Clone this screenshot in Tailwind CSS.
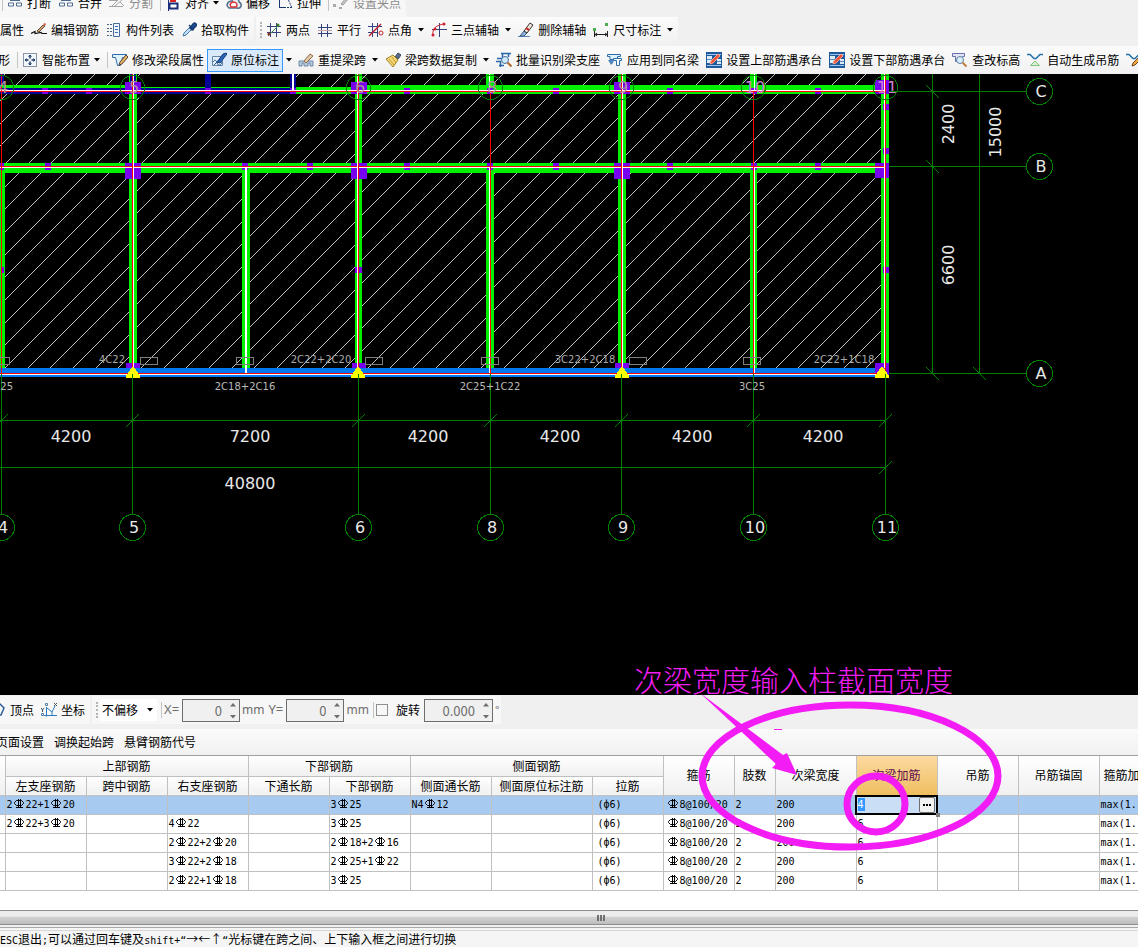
<!DOCTYPE html>
<html lang="zh-CN">
<head>
  <meta charset="UTF-8">
  <title>梁原位标注</title>
  <script src="https://cdn.jsdelivr.net/npm/@tailwindcss/browser@4"></script>
</head>
<body class="h-screen flex flex-col overflow-hidden bg-[#f0f0f0] text-black text-xs font-['Noto_Sans_CJK_SC',sans-serif]">

  <!-- Icon sprite -->
  <svg class="hidden">
    <defs>
      <symbol id="arrow" viewBox="0 0 6 4"><path d="M0 0h6L3 3.5z" fill="#000"/></symbol>
      <symbol id="rebar" viewBox="0 0 12 12"><path d="M3.500 2.500h5l2 2v1l-2 2h-5l-2-2v-1z" fill="none" stroke="#000"/><path d="M5.500 1v9M7.500 1v9M3 9.500h7" fill="none" stroke="#000" shape-rendering="crispEdges"/></symbol>
      <symbol id="break" viewBox="0 0 16 16"><path d="M1.500 8v3h5v-3zM9.500 8v3h5v-3zM3 5.500h10" fill="#fff" stroke="#4f6d8f"/></symbol>
      <symbol id="split" viewBox="0 0 16 16"><path d="M0 5.500h9M0 11.500h14M3 11l9-9 2 2-9 8M11 7l4 4" fill="none" stroke="#a5a5a5"/></symbol>
      <symbol id="align" viewBox="0 0 16 16"><path d="M3.500 0v16" stroke="#1c2f7c"/><path d="M5 3h6v4H5z" fill="#d22"/><path d="M4.500 8.500h8v5h-8z" fill="#fff" stroke="#1c2f7c" stroke-width="2"/></symbol>
      <symbol id="offset" viewBox="0 0 16 16"><path d="M3 13c-4-3-1-7 3-7 1-4 7-3 7 1 4 2 2 7-2 6z" fill="#e7eef5" stroke="#536d87" stroke-width="1.500"/><path d="M5 12c-2-3 0-4 2-5 4 0 5 3 3 5z" fill="#fff" stroke="#d33" stroke-width="1.500"/></symbol>
      <symbol id="stretch" viewBox="0 0 16 16"><path d="M2.500 2v11M2 12.500h5" stroke="#17396e" fill="none"/><path d="M5 4.500h6M7 12.500h8M11.500 5l3 7" stroke="#17396e" stroke-dasharray="2 1" fill="none"/></symbol>
      <symbol id="grips" viewBox="0 0 16 16"><path d="M0 9h3v3H0zM6 12h3v2H6z" fill="#aaa"/><path d="M8 9l6-7 2 1-6 7z" fill="#c9c9c9" stroke="#999"/></symbol>
      <symbol id="editbar" viewBox="0 0 16 16"><path d="M0 11.500l4-2v2l6-1 1 1h5" fill="none" stroke="#111" stroke-width="1.200"/><path d="M6 9l6-6 2 1-6 6z" fill="#c8a878" stroke="#6b4a36"/><path d="M12 2l2 2 1-2-1-1z" fill="#e65b4f"/></symbol>
      <symbol id="list" viewBox="0 0 16 16"><path d="M7.500 1.500h6v13h-6z" fill="#eef5fc" stroke="#4c6c98"/><path d="M9 4.500h3M9 7.500h3M9 10.500h3" stroke="#3671b8"/><path d="M1 2.500h5M1 6.500h5M1 9.500h5M1 13.500h5" stroke="#46617f" stroke-dasharray="2 1"/></symbol>
      <symbol id="pick" viewBox="0 0 16 16"><path d="M2 14l1-3 6-6 2 2-6 6z" fill="#bfe0f7" stroke="#477aa8"/><path d="M8 3l5 5M9 6l3-4c2-2 4 0 3 2l-4 4z" fill="#1e5096" stroke="#173c75" stroke-width="1.500"/></symbol>
      <symbol id="grid2" viewBox="0 0 16 16"><path d="M4.500 1v14M10.500 1v14M1 4.500h14M1 10.500h14" stroke="#35437c"/><path d="M2 14L13 3" stroke="#35854a"/><circle cx="12" cy="3" r="1.500" fill="#3a7f2c"/><circle cx="3" cy="12" r="1.500" fill="#902c1c"/></symbol>
      <symbol id="gridp" viewBox="0 0 16 16"><path d="M4.500 2v13M10.500 2v13M1 5.500h14" stroke="#35437c"/><path d="M1 11.500h14" stroke="#35437c"/><path d="M1 8.500h14" stroke="#c9a0a8"/></symbol>
      <symbol id="gridc" viewBox="0 0 16 16"><path d="M4.500 1v14M9.500 1v14M0 4.500h14M0 10.500h10" stroke="#35437c"/><path d="M1 14L13 2" stroke="#c2232f" stroke-width="1.500"/><circle cx="13" cy="11" r="2" fill="none" stroke="#c2232f"/></symbol>
      <symbol id="grid3" viewBox="0 0 16 16"><path d="M8.500 1v14M1 7.500h15" stroke="#35437c"/><path d="M2 13C1 7 5 3 13 2" fill="none" stroke="#d0202c"/><circle cx="2" cy="13" r="1.500" fill="#d0202c"/><circle cx="4" cy="7" r="1.500" fill="#d0202c"/><circle cx="13" cy="2" r="1.500" fill="#d0202c"/></symbol>
      <symbol id="erase" viewBox="0 0 16 16"><path d="M0 14.500h12" stroke="#5b85b4"/><path d="M2 14l4-5 3 2-3 3z" fill="#8fb4df" stroke="#3a5a85"/><path d="M6 9l6-8 3 2-6 8z" fill="#efe7dc" stroke="#333"/><path d="M8 6l3 2" stroke="#c22" stroke-width="2"/></symbol>
      <symbol id="dim" viewBox="0 0 16 16"><path d="M1.500 9v6M14.500 9v6M2 12.500h12M4 11l-2 1.500 2 1.500M12 11l2 1.500-2 1.500" fill="none" stroke="#222"/><path d="M0 6h3v3H0zM12 1h3v3h-3z" fill="#4cae4f"/></symbol>
      <symbol id="smart" viewBox="0 0 16 16"><path d="M1.500 1.500h13v13h-13z" fill="#f2f7fc" stroke="#1b3557" stroke-dasharray="1 1"/><path d="M8 3v3.500M8 9.500V13M3 8h3.500M9.500 8H13" stroke="#16355e" stroke-width="1.500"/><path d="M6.500 4.500L8 3l1.500 1.500M6.500 11.500L8 13l1.500-1.500M4.500 6.500L3 8l1.500 1.500M11.500 6.500L13 8l-1.500 1.500" fill="none" stroke="#16355e"/></symbol>
      <symbol id="seg" viewBox="0 0 16 16"><path d="M.5 2.500h14v3h-4l-2 8h-3l-2-8h-3z" fill="#dff1fb" stroke="#2e6da8"/><path d="M7 13l1-3 6-7 2 2-6 7z" fill="#e8b266" stroke="#5a4432"/></symbol>
      <symbol id="inplace" viewBox="0 0 16 16"><path d="M1.500 4.500h10v9h-10z" fill="#e6f0fa" stroke="#6586a8"/><path d="M3 13l8-8M2 10c2-3 3-2 4 1s4 3 5-1" stroke="#27588f" fill="none"/><path d="M6 10l6-8 3-1 1 1-7 9z" fill="#2a66b5" stroke="#163d7b"/></symbol>
      <symbol id="respan" viewBox="0 0 16 16"><path d="M1 14v-5h14v5h-3v-3h-2v3H6v-3H4v3z" fill="#b9cbdf" stroke="#6e89a8"/><path d="M6 9l6-7 3 2-7 7z" fill="#e3c9a6" stroke="#896a4d"/></symbol>
      <symbol id="brush" viewBox="0 0 16 16"><path d="M10 5l3-4 3 2-3 4z" fill="#5a6d86" stroke="#36445a"/><path d="M1 7l7-4 5 5-5 7z" fill="#f4d976" stroke="#a2832c"/><path d="M4 7l5 6M7 5l4 6" stroke="#c49c35"/></symbol>
      <symbol id="batch" viewBox="0 0 16 16"><path d="M5 1.500h10M1 6.500h6M0 9.500h5M3 13.500h5M6.500 1v5M12.500 1v4M4.500 9v6" stroke="#2765ac" stroke-width="1.500"/><circle cx="9" cy="8" r="3.500" fill="#cfe8fb" stroke="#44719f"/><path d="M11.500 10.500l4 4" stroke="#b56b2f" stroke-width="2"/></symbol>
      <symbol id="apply" viewBox="0 0 16 16"><path d="M.5 2.500h13v2h-3v3H3v-3H.500z" fill="#dff1fb" stroke="#2e6da8"/><path d="M6.500 6.500h8v2h-2v5h-3v-5h-3z" fill="#fff" stroke="#2e6da8"/><path d="M1 8h6l-1 3-2 2z" fill="#5288be"/></symbol>
      <symbol id="cap" viewBox="0 0 16 16"><path d="M0 0h16v16H0z" fill="#1e5a9c"/><path d="M1 2.500h14M1 13.500h14" stroke="#9ec5ea"/><path d="M1 4h5v7H1zM11 7h4v5h-4z" fill="#dcebf8"/><path d="M1 7.500h5M11 9.500h4" stroke="#5a8cc0"/><path d="M4 12l1-3 7-7 2 2-7 7z" fill="#ef5136" stroke="#f7a08e"/></symbol>
      <symbol id="elev" viewBox="0 0 16 16"><path d="M.5 1.500h12v3h-2v5h-7v-5h-3z" fill="#e5e4f5" stroke="#6671ac"/><circle cx="8" cy="8" r="3.500" fill="#d9effb" stroke="#62809f"/><path d="M10.500 10.500l4 4" stroke="#bf7f41" stroke-width="2"/></symbol>
      <symbol id="hang" viewBox="0 0 16 16"><path d="M0 2.500h3l4 4h2l4-4h3" fill="none" stroke="#2471a8" stroke-width="1.500"/><path d="M3.500 13.500L8 9l4.500 4.500z" fill="#d9f1d0" stroke="#84c180"/></symbol>
      <symbol id="hangedit" viewBox="0 0 16 16"><path d="M0 2.500h3l4 4h2l4-4h3" fill="none" stroke="#2471a8" stroke-width="1.500"/><path d="M6 14l1-3 6-6 2 2-6 6z" fill="#f0a63c" stroke="#6b4a26"/></symbol>
      <symbol id="vertex" viewBox="0 0 16 16"><path d="M9 1l5 5-3 7H4" fill="none" stroke="#2d5d9f" stroke-width="1.500"/></symbol>
      <symbol id="coord" viewBox="0 0 16 16"><path d="M5.500 5v9.500M3 13.500h13M6 6l5 4 3-6M11 10v4" fill="none" stroke="#2b7cc0"/><path d="M4.500 1.500h2v2h-2zM.5 11.500h2v2h-2z" fill="#fff" stroke="#567fa9"/><path d="M13 1l3 3M16 1l-3 3M0 6l1.500 2L3 6M1.500 8v2" fill="none" stroke="#48525e"/></symbol>
    </defs>
  </svg>

  <!-- Toolbars -->
  <header class="shrink-0 overflow-hidden whitespace-nowrap">
    <div class="h-[17px] flex items-end overflow-hidden">
      <div class="h-[29px] flex items-center bg-[#f7f7f7] pr-0.5">
        <span class="w-px h-4 ml-0.5 bg-[#c4c4c4]"></span>
        <button class="flex items-center gap-1 pl-1 pr-[3px]"><svg class="size-4"><use href="#break"/></svg>打断</button>
        <button class="flex items-center gap-1 pl-1 pr-[3px]"><svg class="size-4"><use href="#break"/></svg>合并</button>
        <button class="flex items-center gap-1 pl-1 pr-[3px] text-[#8d8d8d]"><svg class="size-4"><use href="#split"/></svg>分割</button>
        <span class="w-px h-4 ml-1 bg-[#c4c4c4]"></span>
        <button class="flex items-center gap-1 pl-1 pr-[3px]"><svg class="size-4"><use href="#align"/></svg>对齐<svg class="w-1.5 h-1"><use href="#arrow"/></svg></button>
        <button class="flex items-center gap-1 pl-1 pr-[3px]"><svg class="size-4"><use href="#offset"/></svg>偏移</button>
        <button class="flex items-center gap-1 pl-1 pr-[3px]"><svg class="size-4"><use href="#stretch"/></svg>拉伸</button>
        <span class="w-px h-4 ml-1 bg-[#c4c4c4]"></span>
        <button class="flex items-center gap-1 pl-1 pr-[3px] text-[#8d8d8d]"><svg class="size-4"><use href="#grips"/></svg>设置夹点</button>
      </div>
    </div>
    <div class="h-[29px] flex items-start">
      <div class="h-7 pb-0.5 flex items-center bg-linear-to-b from-[#fbfbfb] to-[#f1f1f1] pr-0.5">
        <button class="pr-[3px]">属性</button>
        <button class="flex items-center gap-1 pl-1 pr-[3px]"><svg class="size-4"><use href="#editbar"/></svg>编辑钢筋</button>
        <button class="flex items-center gap-1 pl-1 pr-[3px]"><svg class="size-4"><use href="#list"/></svg>构件列表</button>
        <button class="flex items-center gap-1 pl-1 pr-[3px]"><svg class="size-4"><use href="#pick"/></svg>拾取构件</button>
      </div>
      <div class="h-7 pb-0.5 flex items-center bg-linear-to-b from-[#fbfbfb] to-[#f1f1f1] ml-0.5 pl-1 pr-0.5">
        <span class="h-4 border-l-2 border-dotted border-[#b5b5b5]"></span>
        <button class="flex items-center gap-1 pl-1 pr-[3px]"><svg class="size-4"><use href="#grid2"/></svg>两点</button>
        <button class="flex items-center gap-1 pl-1 pr-[3px]"><svg class="size-4"><use href="#gridp"/></svg>平行</button>
        <button class="flex items-center gap-1 pl-1 pr-[3px]"><svg class="size-4"><use href="#gridc"/></svg>点角</button>
        <button class="px-[3px]" aria-label="点角选项"><svg class="w-1.5 h-1"><use href="#arrow"/></svg></button>
        <button class="flex items-center gap-1 pl-1 pr-[3px]"><svg class="size-4"><use href="#grid3"/></svg>三点辅轴</button>
        <button class="px-[3px]" aria-label="三点辅轴选项"><svg class="w-1.5 h-1"><use href="#arrow"/></svg></button>
        <button class="flex items-center gap-1 pl-1 pr-[3px]"><svg class="size-4"><use href="#erase"/></svg>删除辅轴</button>
        <button class="flex items-center gap-1 pl-1 pr-[3px]"><svg class="size-4"><use href="#dim"/></svg>尺寸标注</button>
        <button class="px-[3px]" aria-label="尺寸标注选项"><svg class="w-1.5 h-1"><use href="#arrow"/></svg></button>
      </div>
    </div>
    <div class="h-7 flex items-center bg-linear-to-b from-[#fbfbfb] to-[#f1f1f1]">
      <button class="-ml-0.5 pr-[3px] shrink-0">形</button>
      <span class="w-px h-4 ml-1 bg-[#c4c4c4] shrink-0"></span>
      <button class="flex items-center gap-1 pl-1 pr-[3px] shrink-0"><svg class="size-4"><use href="#smart"/></svg>智能布置<svg class="w-1.5 h-1"><use href="#arrow"/></svg></button>
      <span class="w-px h-4 ml-1 bg-[#c4c4c4] shrink-0"></span>
      <button class="flex items-center gap-1 pl-1 pr-[3px] shrink-0"><svg class="size-4"><use href="#seg"/></svg>修改梁段属性</button>
      <button class="h-[23px] flex items-center gap-1 px-[3px] border border-[#3399ff] bg-[#dbeafa] shrink-0"><svg class="size-4"><use href="#inplace"/></svg>原位标注</button>
      <button class="px-[3px] shrink-0" aria-label="原位标注选项"><svg class="w-1.5 h-1"><use href="#arrow"/></svg></button>
      <button class="flex items-center gap-1 px-[3px] shrink-0"><svg class="size-4"><use href="#respan"/></svg>重提梁跨</button>
      <button class="px-[3px] shrink-0" aria-label="重提梁跨选项"><svg class="w-1.5 h-1"><use href="#arrow"/></svg></button>
      <button class="flex items-center gap-1 pl-1 pr-[3px] shrink-0"><svg class="size-4"><use href="#brush"/></svg>梁跨数据复制</button>
      <button class="px-[3px] shrink-0" aria-label="梁跨数据复制选项"><svg class="w-1.5 h-1"><use href="#arrow"/></svg></button>
      <button class="flex items-center gap-1 pl-1 pr-[3px] shrink-0"><svg class="size-4"><use href="#batch"/></svg>批量识别梁支座</button>
      <button class="flex items-center gap-1 pl-1 pr-[3px] shrink-0"><svg class="size-4"><use href="#apply"/></svg>应用到同名梁</button>
      <button class="flex items-center gap-1 pl-1 pr-[3px] shrink-0"><svg class="size-4"><use href="#cap"/></svg>设置上部筋遇承台</button>
      <button class="flex items-center gap-1 pl-1 pr-[3px] shrink-0"><svg class="size-4"><use href="#cap"/></svg>设置下部筋遇承台</button>
      <button class="flex items-center gap-1 pl-1 pr-[3px] shrink-0"><svg class="size-4"><use href="#elev"/></svg>查改标高</button>
      <button class="flex items-center gap-1 pl-1 pr-[3px] shrink-0"><svg class="size-4"><use href="#hang"/></svg>自动生成吊筋</button>
      <button class="pl-1 shrink-0" aria-label="编辑吊筋"><svg class="size-4"><use href="#hangedit"/></svg></button>
    </div>
  </header>

  <!-- Floor plan -->
  <main class="flex-1 min-h-0 bg-black">
    <svg id="plan" class="w-full h-full font-['DejaVu_Sans',sans-serif]"></svg>
  </main>

  <!-- Bottom dock -->
  <section class="relative z-10 shrink-0 whitespace-nowrap">
    <div class="h-[34px] flex items-center pb-1">
      <div class="h-7 flex items-center bg-[#f7f7f7] pr-0.5">
        <button class="flex items-center gap-1 -ml-2.5 pr-[3px]"><svg class="size-4"><use href="#vertex"/></svg>顶点</button>
        <button class="flex items-center gap-1 pl-1 pr-[3px]"><svg class="size-4"><use href="#coord"/></svg>坐标</button>
      </div>
      <div class="h-7 flex items-center bg-[#f7f7f7] ml-0.5 pl-1 text-[#6d6d6d]">
        <span class="h-4 mr-0.5 border-l-2 border-dotted border-[#b5b5b5]"></span>
        <div class="relative flex items-center">
          <select class="w-[57px] h-[22px] appearance-none bg-white pl-0.5 text-black" aria-label="偏移方式"><option>不偏移</option></select>
          <svg class="absolute right-1 w-1.5 h-1 pointer-events-none"><use href="#arrow"/></svg>
        </div>
        <span class="w-px h-4 ml-1 mr-0.5 bg-[#c4c4c4]"></span>
        <label for="offX" class="w-[18px] text-[13px] font-['Noto_Sans',sans-serif]">X=</label>
        <div class="relative">
          <input id="offX" value="0" class="block w-[58px] h-[23px] border border-[#6d6d6d] bg-[#f0f0f0] pr-[17px] text-right text-[13px]">
          <svg class="absolute right-1 top-1 w-1.5 h-4" viewBox="0 0 6 16"><path d="M0 3.500h6L3 0zM0 12h6l-3 3.500z" fill="#6d6d6d"/></svg>
        </div>
        <span class="mx-0.5 font-['Noto_Sans',sans-serif]">mm</span>
        <label for="offY" class="w-[18px] ml-0.5 text-[13px] font-['Noto_Sans',sans-serif]">Y=</label>
        <div class="relative">
          <input id="offY" value="0" class="block w-[58px] h-[23px] border border-[#6d6d6d] bg-[#f0f0f0] pr-[17px] text-right text-[13px]">
          <svg class="absolute right-1 top-1 w-1.5 h-4" viewBox="0 0 6 16"><path d="M0 3.500h6L3 0zM0 12h6l-3 3.500z" fill="#6d6d6d"/></svg>
        </div>
        <span class="mx-0.5 font-['Noto_Sans',sans-serif]">mm</span>
        <span class="w-px h-4 mx-0.5 bg-[#c4c4c4]"></span>
        <input id="rotate" type="checkbox" class="appearance-none size-3 mr-2 border border-[#8f8f8f]">
        <label for="rotate" class="mr-1 text-black">旋转</label>
        <div class="relative">
          <input value="0.000" aria-label="旋转角度" class="block w-[69px] h-[23px] border border-[#6d6d6d] bg-[#f0f0f0] pr-[17px] text-right text-[13px]">
          <svg class="absolute right-1 top-1 w-1.5 h-4" viewBox="0 0 6 16"><path d="M0 3.500h6L3 0zM0 12h6l-3 3.500z" fill="#6d6d6d"/></svg>
        </div>
        <span class="px-0.5">°</span>
      </div>
    </div>

    <div class="h-[27px] flex items-center gap-2.5 bg-linear-to-b from-[#fbfbfb] to-[#f1f1f1] border-b border-[#a0a0a0]">
      <button class="-ml-1">页面设置</button>
      <button>调换起始跨</button>
      <button>悬臂钢筋代号</button>
    </div>

    <div class="h-[154px] bg-white overflow-hidden">
      <table class="table-fixed w-[1180px] border-collapse text-left">
        <colgroup>
          <col class="w-[5px]"><col class="w-[81px]"><col class="w-[81px]"><col class="w-[81px]"><col class="w-[81px]"><col class="w-[81px]">
          <col class="w-[81px]"><col class="w-[101px]"><col class="w-[71px]"><col class="w-[71px]"><col class="w-[41px]"><col class="w-[81px]">
          <col class="w-[81px]"><col class="w-[81px]"><col class="w-[81px]"><col class="w-[81px]">
        </colgroup>
        <thead class="text-center [&_th]:font-normal [&_th]:p-0 [&_th]:leading-4 [&_th]:border-r [&_th]:border-b [&_th]:border-[#c0c0c0] [&_th]:bg-linear-to-b [&_th]:from-white [&_th]:to-[#f0f0f0]">
          <tr class="h-5">
            <th rowspan="2"></th>
            <th colspan="3">上部钢筋</th>
            <th colspan="2">下部钢筋</th>
            <th colspan="3">侧面钢筋</th>
            <th rowspan="2">箍筋</th>
            <th rowspan="2">肢数</th>
            <th rowspan="2">次梁宽度</th>
            <td rowspan="2" class="p-0 border-r border-b border-[#c0c0c0] bg-linear-to-b from-[#fbd9a0] to-[#f0be5e] text-[#5c0a4c]">次梁加筋</td>
            <th rowspan="2">吊筋</th>
            <th rowspan="2">吊筋锚固</th>
            <th rowspan="2"><div class="pl-1 text-left overflow-hidden">箍筋加密长度</div></th>
          </tr>
          <tr class="h-[19px]">
            <th>左支座钢筋</th><th>跨中钢筋</th><th>右支座钢筋</th><th>下通长筋</th><th>下部钢筋</th>
            <th>侧面通长筋</th><th>侧面原位标注筋</th><th>拉筋</th>
          </tr>
        </thead>
        <tbody id="rows" class="text-[10px] font-['DejaVu_Sans_Mono',monospace]"></tbody>
      </table>
    </div>

    <!-- Horizontal scrollbar -->
    <div class="h-[15px] flex justify-center items-center gap-px pl-16 border-y border-[#8e8e8e] bg-linear-to-b from-[#ececec] from-40% via-[#d0d0d2] via-50% to-[#bdbdc0]">
      <span class="w-0.5 h-1.5 bg-[#707070]"></span><span class="w-0.5 h-1.5 bg-[#707070]"></span><span class="w-0.5 h-1.5 bg-[#707070]"></span>
    </div>
    <div class="h-1 mt-0.5 border-t border-[#a8a8a8] bg-[#f5f5f5] border-b border-b-[#d8d8d8]"></div>
    <footer class="h-4 flex items-center overflow-hidden bg-[#f5f5f5]">
      <p><span class="font-['DejaVu_Sans_Mono',monospace] text-[10px]">ESC</span>退出<span class="font-['DejaVu_Sans_Mono',monospace] text-[10px]">;</span>可以通过回车键及<span class="font-['DejaVu_Sans_Mono',monospace] text-[10px]">shift+“</span>→←↑<span class="font-['DejaVu_Sans_Mono',monospace] text-[10px]">“</span>光标键在跨之间、上下输入框之间进行切换</p>
    </footer>

    <!-- Markup drawn over the plan and the table -->
    <svg class="absolute left-0 top-0 w-full h-full overflow-visible pointer-events-none">
      <g transform="translate(0 -695)" stroke="#f41cf4" stroke-width="7" fill="none">
        <ellipse cx="850" cy="776" rx="148" ry="71"/>
        <ellipse cx="876" cy="804" rx="29" ry="28"/>
        <path d="M700 693L783 755L787 753L797 775L772 768L776 764Z" fill="#f41cf4" stroke="none"/>
        <path d="M774 729.500h8" stroke-width="1"/>
        <text x="634" y="692" fill="#f41cf4" stroke="none" class="text-[29px] font-light">次梁宽度输入柱截面宽度</text>
      </g>
    </svg>
  </section>

  <script>
    const GREEN = '#00f000', AXIS = '#008000', NAVY = '#000096', PURPLE = '#7800f0', BLUE = '#0078f0';
    const out = [];
    const rect = (x1, y1, x2, y2, fill) => out.push(`<rect x="${x1}" y="${y1}" width="${x2 - x1}" height="${y2 - y1}" fill="${fill}"/>`);
    const line = (x1, y1, x2, y2, stroke) => out.push(`<path d="M${x1} ${y1}L${x2} ${y2}" stroke="${stroke}"/>`);
    const text = (x, y, s, size, fill, extra = '') => out.push(`<text x="${x}" y="${y}" font-size="${size}" fill="${fill}" text-anchor="middle" ${extra}>${s}</text>`);
    const bubble = (x, y, r) => out.push(`<circle cx="${x}" cy="${y}" r="${r}" fill="none" stroke="${AXIS}"/>`);

    // slab hatch
    out.push('<clipPath id="slab"><rect x="0" y="74" width="885" height="294"/></clipPath><g clip-path="url(#slab)">');
    for (let i = 0; i < 60; i++) {
      const s = Math.round(78.500 + i * 22.660);
      line(s - 60, 60, s - 380, 380, '#c0c0c0');
    }
    out.push('</g>');
    rect(141, 74, 290, 87, '#000');

    // vertical beams
    rect(0, 168, 5, 368, GREEN);
    rect(129, 74, 137, 368, GREEN);
    rect(355, 74, 362, 368, GREEN);
    rect(242, 168, 250, 368, GREEN);
    rect(486, 168, 494, 368, GREEN);
    rect(486, 74, 494, 90, GREEN);
    rect(618, 74, 626, 368, GREEN);
    rect(750, 168, 757, 368, GREEN);
    rect(750, 74, 757, 90, GREEN);
    rect(881, 74, 889, 373, GREEN);

    // beam on axis C
    rect(0, 85, 125, 88, GREEN);
    rect(0, 88, 296, 94, NAVY);
    rect(141, 87, 290, 88, GREEN);
    rect(205, 74, 211, 88, NAVY);
    rect(290, 74, 296, 94, NAVY);
    rect(130, 74, 136, 82, NAVY);
    rect(0, 74, 4, 85, NAVY);
    rect(296, 87, 355, 94, GREEN);
    rect(362, 85, 885, 94, GREEN);
    // beams on axes B and A
    rect(0, 163, 885, 173, GREEN);
    rect(0, 368, 882, 377, BLUE);

    for (const x of [42, 86, 205, 290, 404, 487, 553, 667, 751, 815]) rect(x, 88, x + 6, 94, PURPLE);
    for (const x of [-2, 45, 242, 307, 404, 487, 553, 667, 751, 815]) rect(x, 163, x + 6, 170, PURPLE);
    for (const y of [104, 148, 267]) rect(883, y, 889, y + 6, PURPLE);
    rect(1, 267, 4, 273, PURPLE);
    rect(355, 267, 362, 273, PURPLE);
    for (const x of [125, 351, 614]) {
      rect(x, 82, x + 16, 94, PURPLE);
      rect(x, 163, x + 16, 179, PURPLE);
      rect(x + 1, 363, x + 15, 368, PURPLE);
    }
    rect(875, 80, 889, 94, PURPLE);
    rect(875, 163, 889, 178, PURPLE);
    rect(875, 363, 889, 377, PURPLE);

    // centre lines
    rect(0, 90, 885, 91, '#fff');  rect(0, 91, 885, 92, '#f00');
    rect(0, 166, 885, 167, '#f00'); rect(0, 167, 885, 168, '#fff');
    rect(0, 373, 885, 374, '#f00'); rect(0, 374, 885, 375, '#fff');
    rect(292, 74, 294, 91, '#fff');
    rect(245, 168, 247, 373, '#fff');
    for (const [w, r] of [[133, 132], [357, 358], [622, 621], [884, 885]]) {
      rect(w, 74, w + 1, 368, '#fff');
      rect(r, 74, r + 1, 373, '#f00');
    }
    for (const [w, r] of [[489, 490], [754, 753]]) {
      rect(w, 168, w + 1, 373, '#fff');
      rect(w, 74, w + 1, 90, '#fff');
      rect(r, 92, r + 1, 373, '#f00');
    }
    rect(1, 74, 2, 373, '#f00');

    // supports
    for (const x of [133, 358, 622, 882]) out.push(`<path d="M${x - 7} 378h14v-2l-6-9h-2l-6 9z" fill="#ff0"/>`);

    // axes along the bottom
    const axes = [[1, '4'], [132, '5'], [358, '6'], [490, '8'], [621, '9'], [753, '10'], [885, '11']];
    for (const [x, n] of axes) {
      rect(x, 374, x + 1, 514, AXIS);
      bubble(x + 0.5, 527.5, 13);
      text(x + 2, 533, n, 16, '#e8e8e8');
      line(x - 6, 427, x + 7, 414, AXIS);
      bubble(x + 0.5, 87.5, 12);
      text(x + 2, 93, n, 16, n === '10' || n === '11' ? '#d080d0' : '#b090a0');
    }
    rect(0, 420, 886, 421, AXIS);
    rect(0, 467, 886, 468, AXIS);
    line(879, 474, 892, 461, AXIS);

    // axes along the right side
    for (const [y, n] of [[91, 'C'], [166, 'B'], [373, 'A']]) {
      rect(889, y, 1027, y + 1, AXIS);
      bubble(1039.5, y + 0.5, 13);
      text(1041, y + 6, n, 16, '#e8e8e8');
      line(926, y - 6, 939, y + 7, AXIS);
    }
    rect(932, 74, 933, 374, AXIS);
    rect(979, 74, 980, 374, AXIS);
    line(973, 367, 986, 380, AXIS);

    for (const [x, s] of [[71, '4200'], [250, '7200'], [428, '4200'], [560, '4200'], [692, '4200'], [823, '4200']]) text(x, 442, s, 16, '#e8e8e8');
    text(250, 489, '40800', 16, '#e8e8e8');
    for (const [x, y, s] of [[954, 124, '2400'], [1001, 132, '15000'], [954, 265, '6600']]) text(x, y, s, 16, '#e8e8e8', `transform="rotate(-90 ${x} ${y})"`);

    // beam labels
    for (const [x, s] of [[112, '4C22'], [321, '2C22+2C20'], [585, '3C22+2C18'], [844, '2C22+1C18']]) text(x, 363, s, 10, '#a8a8a8');
    for (const [x, s] of [[0, '3C25'], [245, '2C18+2C16'], [490, '2C25+1C22'], [752, '3C25']]) text(x, 390, s, 10, '#b8b8b8');
    for (const x of [-8, 140, 236, 365, 481, 629, 743]) out.push(`<rect x="${x + 0.5}" y="357.5" width="17" height="7" fill="none" stroke="#808080"/>`);

    document.getElementById('plan').innerHTML = `<g transform="translate(0 -74)" shape-rendering="crispEdges">${out.join('')}</g>`;

    // span rows; # stands for the rebar grade sign
    const spans = [
      ['2#22+1#20', '', '', '', '3#25', 'N4#12'],
      ['2#22+3#20', '', '4#22', '', '3#25', ''],
      ['', '', '2#22+2#20', '', '2#18+2#16', ''],
      ['', '', '3#22+2#18', '', '2#25+1#22', ''],
      ['', '', '2#22+1#18', '', '3#25', ''],
    ];
    const sign = '<svg class="inline-block size-3 mr-px align-[-2px]"><use href="#rebar"/></svg>';
    const editor = '<div class="absolute -inset-px -left-0.5 flex items-center border-2 border-black bg-[#cadef6]">' +
      '<input value="4" aria-label="次梁加筋" class="w-[7px] h-[13px] ml-px bg-[#3399ff] text-white">' +
      '<button class="w-4 h-4 ml-auto mr-px flex items-center justify-center gap-px rounded-xs border border-[#707070] bg-[#f2f2f2]" aria-label="更多">' +
      '<i class="size-0.5 bg-black"></i><i class="size-0.5 bg-black"></i><i class="size-0.5 bg-black"></i></button>' +
      '<span class="absolute -right-1 -bottom-1 size-1 bg-[#808080]"></span></div>';
    document.getElementById('rows').innerHTML = spans.map((s, i) => {
      const cells = ['', ...s, '', '<span class="pl-1">(ф6)</span>', '<span class="pl-0.5">#8@100/20</span>', '2', '200', i ? '6' : editor, '', '', 'max(1.'];
      return `<tr class="h-[19px] ${i ? '' : 'bg-[#a6caf0]'}">` + cells.map(c =>
        `<td class="relative p-0 pl-px leading-4 border-r border-b border-[#c0c0c0]">${c.startsWith('<div') ? c : c.replace(/#(?=\d)/g, sign)}</td>`).join('') + '</tr>';
    }).join('');
  </script>
</body>
</html>
